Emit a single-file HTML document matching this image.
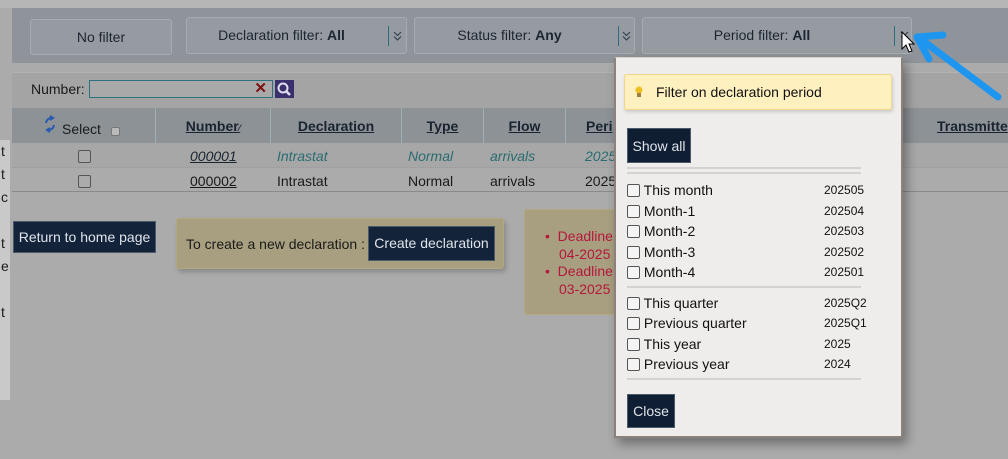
<!DOCTYPE html>
<html><head><meta charset="utf-8"><style>
*{box-sizing:border-box;margin:0;padding:0}
body{width:1008px;height:459px;overflow:hidden;background:#ababab;font-family:"Liberation Sans",Arial,sans-serif;font-size:14px;color:#1a1a1a;position:relative}
.a{position:absolute}
.fb{background:#959ba0;border:1px solid #a6adb2;border-radius:3px;color:#1c2530;text-align:center;line-height:34px}
.dv{position:absolute;top:8px;width:1px;height:20px;background:#2a6f80}
.chev{position:absolute;top:12px}
.th{position:absolute;top:108px;height:35px;line-height:37px;font-weight:bold;text-decoration:underline;color:#1a2430;text-align:center}
.btn{background:#13233a;border:1px solid #4a5a6a;color:#e0e4ea;text-align:center}
.cb{display:inline-block;width:13px;height:13px;border:1px solid #555;border-radius:2px;background:#f4f4f4;vertical-align:-2px}
.pr{position:absolute;left:627px;font-size:14px;color:#111}
.pr .c{position:absolute;left:197px;top:1px;font-size:12px}
.sep{position:absolute;left:627px;width:234px;height:2px;background:#d4d2d0}
</style></head><body>
<div class="a" style="left:0;top:0;width:1008px;height:8px;background:#b6b6b6"></div>
<div class="a" style="left:0;top:140px;width:10px;height:260px;background:#c9c9c9;font-size:14px;line-height:23px;padding-left:1px">t<br>t<br>c<br><br>t<br>e<br><br>t</div>
<div class="a" style="left:12px;top:8px;width:996px;height:55px;background:#8e9499"></div>
<div class="a fb" style="left:30px;top:19px;width:142px;height:36px">No filter</div>
<div class="a fb" style="left:186px;top:17px;width:221px;height:37px"><span style="margin-right:30px">Declaration filter: <b>All</b></span><div class="dv" style="left:201px"></div><svg class="chev" style="left:206px" width="9" height="12"><path d="M1 2 L4.5 5.5 L8 2 M1 6.5 L4.5 10 L8 6.5" stroke="#2c3a48" fill="none" stroke-width="1"/></svg></div>
<div class="a fb" style="left:414px;top:17px;width:221px;height:37px"><span style="margin-right:30px">Status filter: <b>Any</b></span><div class="dv" style="left:203px"></div><svg class="chev" style="left:207px" width="9" height="12"><path d="M1 2 L4.5 5.5 L8 2 M1 6.5 L4.5 10 L8 6.5" stroke="#2c3a48" fill="none" stroke-width="1"/></svg></div>
<div class="a fb" style="left:642px;top:17px;width:270px;height:37px"><span style="margin-right:30px">Period filter: <b>All</b></span><div class="dv" style="left:251px"></div><svg class="chev" style="left:257px" width="9" height="12"><path d="M1 2 L4.5 5.5 L8 2 M1 6.5 L4.5 10 L8 6.5" stroke="#2c3a48" fill="none" stroke-width="1"/></svg></div>
<div class="a" style="left:12px;top:72px;width:996px;height:36px;background:#a4a4a4;border-top:1px solid #b2b2b2"></div>
<div class="a" style="left:31px;top:81px;font-size:14px">Number:</div>
<div class="a" style="left:89px;top:80px;width:184px;height:18px;border:1px solid #2d7080;background:#a9a9a9"><span style="position:absolute;right:5px;top:-2px;color:#7a1010;font-weight:bold;font-size:15px">✕</span></div>
<div class="a" style="left:275px;top:80px;width:19px;height:18px;background:#3a306e"><svg width="19" height="18"><circle cx="8" cy="8" r="4.5" stroke="#dde" stroke-width="2" fill="none"/><line x1="11" y1="11" x2="15" y2="15" stroke="#dde" stroke-width="2.5"/></svg></div>
<div class="a" style="left:12px;top:108px;width:996px;height:35px;background:#8c9296"></div>
<div class="a" style="left:155px;top:108px;width:1px;height:84px;background:#9fb0b4"></div>
<div class="a" style="left:270px;top:108px;width:1px;height:84px;background:#9fb0b4"></div>
<div class="a" style="left:401px;top:108px;width:1px;height:84px;background:#9fb0b4"></div>
<div class="a" style="left:483px;top:108px;width:1px;height:84px;background:#9fb0b4"></div>
<div class="a" style="left:565px;top:108px;width:1px;height:84px;background:#9fb0b4"></div>
<svg class="a" style="left:43px;top:115px" width="14" height="18"><path d="M3 8 Q4 3 9 3 M7 1 L10 3 L7 5 M11 10 Q10 15 5 15 M7 13 L4 15 L7 17" stroke="#2a5ab0" stroke-width="2" fill="none"/></svg>
<div class="a" style="left:62px;top:121px;color:#1a1a1a">Select <span class="cb" style="width:9px;height:9px;margin-left:6px;background:#bbb;border-color:#777"></span></div>
<div class="th" style="left:156px;width:114px">Number<span style="font-size:9px;text-decoration:none">⁄</span></div>
<div class="th" style="left:271px;width:130px">Declaration</div>
<div class="th" style="left:402px;width:81px">Type</div>
<div class="th" style="left:484px;width:81px">Flow</div>
<div class="th" style="left:586px;width:40px;text-align:left">Peri</div>
<div class="th" style="left:937px;width:80px;text-align:left">Transmitte</div>
<div class="a" style="left:12px;top:143px;width:996px;height:25px;background:#a7a7a7;border-bottom:1px dotted #999"></div>
<div class="a" style="left:12px;top:168px;width:996px;height:24px;background:#ababab;border-bottom:1px solid #8a8a8a"></div>
<div class="a" style="left:78px;top:148px"><span class="cb" style="background:#ababab"></span></div>
<div class="a" style="left:78px;top:173px"><span class="cb" style="background:#ababab"></span></div>
<div class="a" style="left:190px;top:148px;font-style:italic;text-decoration:underline;color:#1a2430">000001</div>
<div class="a" style="left:277px;top:148px;font-style:italic;color:#2a6c70">Intrastat</div>
<div class="a" style="left:408px;top:148px;font-style:italic;color:#2a6c70">Normal</div>
<div class="a" style="left:490px;top:148px;font-style:italic;color:#2a6c70">arrivals</div>
<div class="a" style="left:585px;top:148px;font-style:italic;color:#2a6c70">2025</div>
<div class="a" style="left:190px;top:173px;text-decoration:underline">000002</div>
<div class="a" style="left:277px;top:173px">Intrastat</div>
<div class="a" style="left:408px;top:173px">Normal</div>
<div class="a" style="left:490px;top:173px">arrivals</div>
<div class="a" style="left:585px;top:173px">2025</div>
<div class="a btn" style="left:13px;top:221px;width:143px;height:32px;line-height:30px">Return to home page</div>
<div class="a" style="left:176px;top:218px;width:328px;height:51px;background:#a89f80;border:1px solid #b4a880;border-radius:3px;box-shadow:2px 3px 5px rgba(0,0,0,.2)"></div>
<div class="a" style="left:186px;top:236px">To create a new declaration :</div>
<div class="a btn" style="left:368px;top:226px;width:127px;height:35px;line-height:33px">Create declaration</div>
<div class="a" style="left:524px;top:209px;width:100px;height:106px;background:#a89f80;border:1px solid #b4a880;border-radius:3px"></div>
<div class="a" style="left:545px;top:228px;color:#b5173c;line-height:17.5px;font-size:14px">
<div>•&nbsp; Deadline</div><div style="padding-left:14px">04-2025</div><div>•&nbsp; Deadline</div><div style="padding-left:14px">03-2025</div></div>
<div class="a" style="left:614px;top:57px;width:289px;height:381px;background:#efedeb;border:2px solid #8d827b;border-top:1px solid #d8d0c8;box-shadow:4px 6px 10px rgba(0,0,0,.35)"></div>
<div class="a" style="left:624px;top:74px;width:268px;height:36px;background:#fff0c0;border:1px solid #f0d890;border-radius:2px;box-shadow:1px 2px 3px rgba(0,0,0,.15);line-height:34px;padding-left:31px;font-size:14px;color:#111"><svg style="position:absolute;left:10px;top:11px" width="8" height="12"><circle cx="4" cy="4" r="3.5" fill="#f0c020"/><rect x="2" y="7" width="4" height="4" fill="#a08040"/></svg>Filter on declaration period</div>
<div class="a btn" style="left:627px;top:128px;width:64px;height:35px;line-height:34px;background:#0f1e32">Show all</div>
<div class="sep" style="top:167px"></div><div class="sep" style="top:172px"></div>
<div class="pr" style="top:182px"><span class="cb"></span> This month<span class="c">202505</span></div>
<div class="pr" style="top:203px"><span class="cb"></span> Month-1<span class="c">202504</span></div>
<div class="pr" style="top:223px"><span class="cb"></span> Month-2<span class="c">202503</span></div>
<div class="pr" style="top:244px"><span class="cb"></span> Month-3<span class="c">202502</span></div>
<div class="pr" style="top:264px"><span class="cb"></span> Month-4<span class="c">202501</span></div>
<div class="sep" style="top:286px"></div>
<div class="pr" style="top:295px"><span class="cb"></span> This quarter<span class="c">2025Q2</span></div>
<div class="pr" style="top:315px"><span class="cb"></span> Previous quarter<span class="c">2025Q1</span></div>
<div class="pr" style="top:336px"><span class="cb"></span> This year<span class="c">2025</span></div>
<div class="pr" style="top:356px"><span class="cb"></span> Previous year<span class="c">2024</span></div>
<div class="sep" style="top:378px"></div>
<div class="a btn" style="left:627px;top:394px;width:48px;height:34px;line-height:33px;background:#0f1e32">Close</div>
<svg class="a" style="left:895px;top:25px" width="113" height="80"><path d="M103 72 L27 15" stroke="#1e96f0" stroke-width="7" stroke-linecap="round"/><path d="M22 12 L48 10 M22 12 L34 34" stroke="#1e96f0" stroke-width="7" stroke-linecap="round"/><path d="M7 7 L7 24 L11 20 L14 27 L17 26 L14 19 L19 19 Z" fill="#fff" stroke="#000" stroke-width="1"/></svg>
</body></html>
